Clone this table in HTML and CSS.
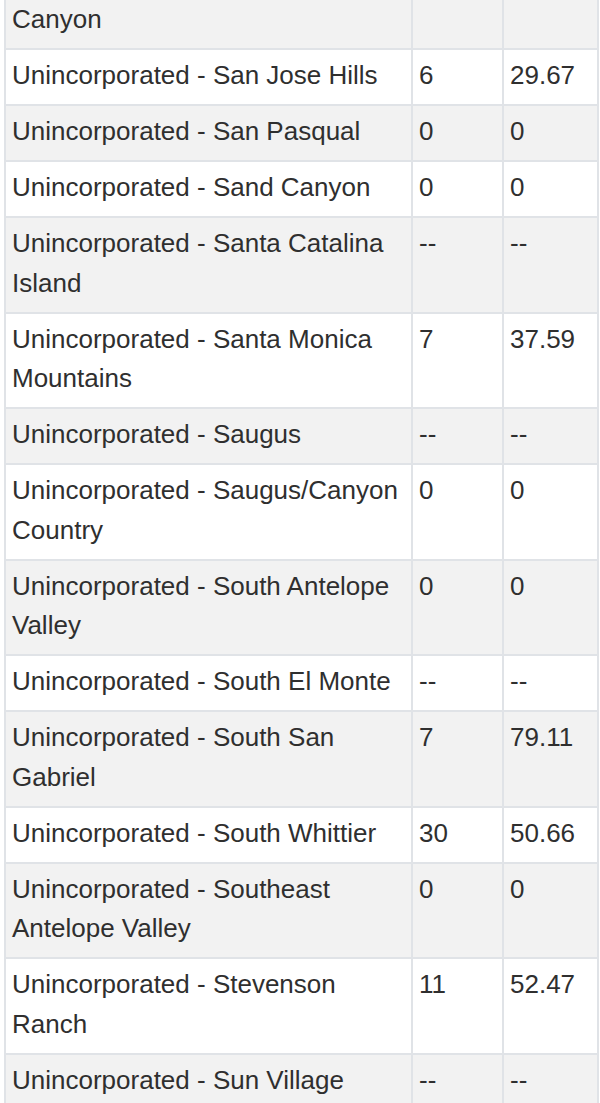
FILE: index.html
```html
<!DOCTYPE html>
<html lang="en">
<head>
<meta charset="utf-8">
<title>Cases by community</title>
<link rel="stylesheet" href="styles.css">
</head>
<body>
<div class="page">
<table class="data">
<colgroup>
<col class="c-name">
<col class="c-num">
<col class="c-rate">
</colgroup>
<tbody>
<tr class="cont"><td>Canyon</td><td></td><td></td></tr>
<tr><td>Unincorporated - San Jose Hills</td><td>6</td><td>29.67</td></tr>
<tr><td>Unincorporated - San Pasqual</td><td>0</td><td>0</td></tr>
<tr><td>Unincorporated - Sand Canyon</td><td>0</td><td>0</td></tr>
<tr><td>Unincorporated - Santa Catalina Island</td><td>--</td><td>--</td></tr>
<tr><td>Unincorporated - Santa Monica Mountains</td><td>7</td><td>37.59</td></tr>
<tr><td>Unincorporated - Saugus</td><td>--</td><td>--</td></tr>
<tr><td>Unincorporated - Saugus/Canyon Country</td><td>0</td><td>0</td></tr>
<tr><td>Unincorporated - South Antelope Valley</td><td>0</td><td>0</td></tr>
<tr><td>Unincorporated - South El Monte</td><td>--</td><td>--</td></tr>
<tr><td>Unincorporated - South San Gabriel</td><td>7</td><td>79.11</td></tr>
<tr><td>Unincorporated - South Whittier</td><td>30</td><td>50.66</td></tr>
<tr><td>Unincorporated - Southeast Antelope Valley</td><td>0</td><td>0</td></tr>
<tr><td>Unincorporated - Stevenson Ranch</td><td>11</td><td>52.47</td></tr>
<tr><td>Unincorporated - Sun Village</td><td>--</td><td>--</td></tr>
</tbody>
</table>
</div>
</body>
</html>
```

FILE: styles.css
```css
html, body {
  margin: 0;
  padding: 0;
  background: #ffffff;
}

body {
  font-family: "Liberation Sans", Arial, Helvetica, sans-serif;
  color: #2f2f2f;
  overflow: hidden;
}

.page {
  padding-left: 4px;
}

.data {
  border-collapse: collapse;
  table-layout: fixed;
  width: 593px;
  font-size: 26px;
  line-height: 39.5px;
}

.c-name { width: 407px; }
.c-num { width: 91px; }
.c-rate { width: 95px; }

.data td {
  border: 2px solid #e0e3e7;
  padding: 6px 6px 8.5px 6px;
  vertical-align: top;
  text-align: left;
}

.data tr.cont td {
  border-top: none;
  padding-top: 0;
}

.data tr:nth-child(odd) td {
  background: #f2f2f2;
}

.data tr:nth-child(even) td {
  background: #ffffff;
}
```
